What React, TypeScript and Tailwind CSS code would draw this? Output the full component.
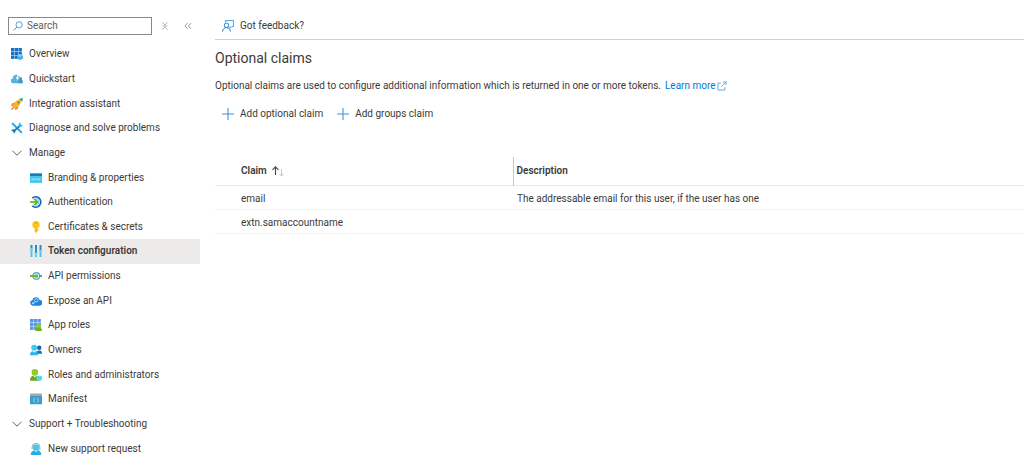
import type { ReactNode } from "react";

const svg = (children: ReactNode, size = "size-3") => (
  <svg viewBox="0 0 16 16" className={`${size} shrink-0`} fill="none" aria-hidden="true">
    {children}
  </svg>
);

const icons = {
  overview: svg(
    <>
      {[0, 5, 10].map((y) =>
        [0, 5, 10].map((x) => (
          <rect key={`${x}-${y}`} x={x} y={y} width="4.5" height="4.5" fill="#1173c7" />
        )),
      )}
      <path d="M12 8l4 2v4l-4 2-4-2v-4z" fill="#4aa9e0" />
      <path d="M12 8l4 2-4 2-4-2z" fill="#8fd0f5" />
    </>,
  ),
  quickstart: svg(
    <>
      <path d="M3 13.500a3 3 0 0 1-.6-6A4.600 4.600 0 0 1 10.500 4a4.500 4.500 0 0 1 3 4.300 2.700 2.700 0 0 1-.3 5.200z" fill="#56b2dd" />
      <path d="M9.500 13.500l1.500-6 3-2.500 2 8.500z" fill="#3b9dcb" />
      <path d="M8.500 3l-2 4.500h2L7.200 11l4-5H9l1.500-3z" fill="#fff" />
    </>,
  ),
  rocket: svg(
    <>
      <path d="M6 6L1.500 7 0 10.500l4 .5zM10 10l-1 4.500L5.500 16 5 12z" fill="#f28a1a" />
      <path d="M2.500 10C4.500 4.500 9 1.500 14.500 1 14 6.500 11 11 6 13.500z" fill="#ffb31a" />
      <path d="M16 0l-5 1 4 4z" fill="#1d9ad0" />
      <circle cx="10" cy="6" r="1.400" fill="#2b8ac6" />
      <path d="M3 10.500l2.500 2.500L1 16H0v-1z" fill="#f59a1c" />
    </>,
  ),
  tools: svg(
    <>
      <path d="M1.500 1.500l13 13" stroke="#28a8e0" strokeWidth="2.800" />
      <path d="M13 4L3.500 12.500" stroke="#1c86bd" strokeWidth="2.600" />
      <path d="M15.800 3.800a3.700 3.700 0 0 1-5 2.200A3.700 3.700 0 0 1 12.700.2l-.4 2.700 1.200.9z" fill="#32b4e6" />
      <path d="M.2 12.100a3.700 3.700 0 0 1 5-2 3.700 3.700 0 0 1-1.800 5.700l.3-2.600-1.300-1z" fill="#1674a8" />
    </>,
  ),
  branding: svg(
    <>
      <path d="M0 2h16v12.500H0z" fill="#3fc8ee" />
      <path d="M0 2h16v3.200H0z" fill="#1276b8" />
      <path d="M2 8.500l1 2.500 1-2.500L5 11l1-2.500M6.500 8.500l1 2.500 1-2.500 1 2.500M10.500 11l1-2.500 1 2.500 1-2.500" stroke="#b8effc" strokeWidth=".8" />
    </>,
  ),
  authentication: svg(
    <>
      <path d="M3 2.900A6.800 6.800 0 1 1 3 13.100" stroke="#1565b5" strokeWidth="2.400" />
      <path d="M4.500 5a4.200 4.200 0 1 1 0 6" stroke="#46b2ef" strokeWidth="1.200" />
      <path d="M0 8h10" stroke="#62b219" strokeWidth="2.200" />
      <path d="M6 4.300L9.700 8 6 11.700" stroke="#62b219" strokeWidth="2.200" />
    </>,
  ),
  key: svg(
    <>
      <circle cx="8" cy="5" r="5" fill="#ffc51d" />
      <path d="M6.300 8h3.400v6.300L8 16l-1.700-1.700z" fill="#fdb813" />
      <circle cx="8" cy="2.600" r="1" fill="#d48700" />
      <path d="M9.700 10.500h1.300v2.500H9.700z" fill="#e8a000" />
    </>,
  ),
  token: svg(
    <>
      <path d="M.7 0h2.600v5H.7zM6.700 0h2.600v10.500H6.700zM12.700 0h2.600v7h-2.600z" fill="#2b86c2" />
      <path d="M.7 6h2.600v10H.7zM6.700 13h2.600v3H6.700zM12.700 9h2.600v7h-2.600z" fill="#47c9ed" />
      <path d="M0 4h4v2.700H0zM6 10h4v2.700H6zM12 6.500h4v2.700h-4z" fill="#6fd5f2" />
    </>,
  ),
  api: svg(
    <>
      <circle cx="8.500" cy="8" r="4.400" stroke="#5aaed0" strokeWidth="1.800" />
      <path d="M0 8h9" stroke="#69ad20" strokeWidth="2.400" />
      <circle cx="8.500" cy="8" r="2.500" fill="#75b927" />
      <path d="M12.500 8H16" stroke="#389ac3" strokeWidth="2.400" />
    </>,
  ),
  expose: svg(
    <>
      <path d="M3.500 14.200a3.600 3.600 0 0 1-.4-7.100 5 5 0 0 1 9.600-.7 3.900 3.900 0 0 1-.4 7.800z" fill="#2583da" />
      <path d="M4 11.500L8 8" stroke="#b9e0ff" strokeWidth="1.200" />
      <circle cx="8.500" cy="7" r="2.200" stroke="#b9e0ff" strokeWidth="1.100" />
      <circle cx="4" cy="11" r="1.300" fill="#b9e0ff" />
    </>,
  ),
  roles: svg(
    <>
      {[0, 5, 10].map((y) =>
        [0, 5, 10].map((x) => (
          <rect key={`${x}-${y}`} x={x} y={y} width="4.500" height="4.500" fill="#5a95e8" />
        )),
      )}
      <path d="M7 16c.2-3.500 1.500-4.800 4.500-4.800S15.800 12.500 16 16z" fill="#6db31c" />
      <circle cx="11.500" cy="8.500" r="3" fill="#86cc2a" />
    </>,
  ),
  owners: svg(
    <>
      <circle cx="12.300" cy="5" r="2.900" fill="#0f65b5" />
      <path d="M8.500 13c0-3 1-4.500 3.800-4.500S16 10 16 13z" fill="#1672c4" />
      <path d="M0 15c0-4 1.500-5.800 5.500-5.800S11 11 11 15z" fill="#2bb5e8" />
      <circle cx="5.500" cy="5" r="3.900" fill="#40c8f2" />
      <path d="M3.700 9.300l1.800 2.200 1.900-2.200z" fill="#fff" />
    </>,
  ),
  admins: svg(
    <>
      <path d="M0 15.500C.2 10.500 2 9 6.500 9s6 1.500 6.300 6.500z" fill="#69a51d" />
      <circle cx="6.500" cy="4.500" r="4.400" fill="#91cb2c" />
      <path d="M4.500 9l2 2.500 2-2.500z" fill="#e9f7cf" />
      <path d="M12.300 8.500l3.700 1v3c0 2-1.800 3-3.700 3.500-2-.5-3.700-1.500-3.700-3.500v-3z" fill="#5bd5ee" />
    </>,
  ),
  manifest: svg(
    <>
      <path d="M0 1h16v14H0z" fill="#3b9dcc" />
      <path d="M0 1h16v3H0z" fill="#a5a7a9" />
      <path d="M6.500 6.500c-1.500 0-.5 2-2 3 1.500 1 .5 3 2 3M9.500 6.500c1.500 0 .5 2 2 3-1.500 1-.5 3-2 3" stroke="#bfe8fa" strokeWidth="1.100" />
    </>,
  ),
  support: svg(
    <>
      <path d="M1 16c.2-4.500 2-6 7-6s6.700 1.500 7 6z" fill="#25afe3" />
      <circle cx="8" cy="6" r="4.400" fill="#42c9ef" />
      <path d="M2.800 8V5.500a5.200 5.200 0 0 1 10.400 0V8c0 1.500-1 2.500-3 2.500" stroke="#a0a4a7" strokeWidth="1.200" />
      <path d="M6.500 10.300l1.500 2 1.500-2z" fill="#fff" />
    </>,
  ),
};

const chevron = svg(<path d="M2 5l6 6 6-6" stroke="#605e5c" strokeWidth="1.300" />);
const plus = svg(<path d="M8 0v16M0 8h16" stroke="#3a93d8" strokeWidth="1.400" />);

type Item = { label: string; icon: ReactNode; level?: "sub" | "group"; current?: boolean };

const items: Item[] = [
  { label: "Overview", icon: icons.overview },
  { label: "Quickstart", icon: icons.quickstart },
  { label: "Integration assistant", icon: icons.rocket },
  { label: "Diagnose and solve problems", icon: icons.tools },
  { label: "Manage", icon: chevron, level: "group" },
  { label: "Branding & properties", icon: icons.branding, level: "sub" },
  { label: "Authentication", icon: icons.authentication, level: "sub" },
  { label: "Certificates & secrets", icon: icons.key, level: "sub" },
  { label: "Token configuration", icon: icons.token, level: "sub", current: true },
  { label: "API permissions", icon: icons.api, level: "sub" },
  { label: "Expose an API", icon: icons.expose, level: "sub" },
  { label: "App roles", icon: icons.roles, level: "sub" },
  { label: "Owners", icon: icons.owners, level: "sub" },
  { label: "Roles and administrators", icon: icons.admins, level: "sub" },
  { label: "Manifest", icon: icons.manifest, level: "sub" },
  { label: "Support + Troubleshooting", icon: chevron, level: "group" },
  { label: "New support request", icon: icons.support, level: "sub" },
];

const claims = [
  { name: "email", description: "The addressable email for this user, if the user has one" },
  { name: "extn.samaccountname", description: "" },
];

function NavItem({ item }: { item: Item }) {
  const row = "flex h-full w-full items-center gap-1.5 pr-2 text-left whitespace-nowrap";
  if (item.level === "group") {
    return (
      <button type="button" aria-expanded="true" className={`${row} pl-[11px]`}>
        {item.icon}
        {item.label}
      </button>
    );
  }
  return (
    <a
      href="#"
      aria-current={item.current ? "page" : undefined}
      className={`${row} ${item.level === "sub" ? "pl-[30px]" : "pl-[11px]"} ${
        item.current ? "bg-[#edebe9] font-semibold" : ""
      }`}
    >
      {item.icon}
      {item.label}
    </a>
  );
}

function Sidebar() {
  return (
    <aside className="w-[200px] shrink-0">
      <div className="flex items-center pt-[17px] pb-[7px] pl-2">
        <label className="flex h-[18px] w-36 items-center gap-1 border border-[#8a8886] px-1">
          {svg(
            <>
              <circle cx="9.800" cy="6" r="5" stroke="#3a93d8" strokeWidth="1.400" />
              <path d="M6 9.800L.8 15" stroke="#3a93d8" strokeWidth="1.500" />
            </>,
            "size-2.5",
          )}
          <input
            type="text"
            aria-label="Search"
            placeholder="Search"
            className="w-full min-w-0 bg-transparent outline-none placeholder:text-[#605e5c]"
          />
        </label>
        <button type="button" aria-label="Expand all" className="ml-2 flex w-2.5 justify-center">
          {svg(<path d="M4 2l4 4.500L12 2M4 14l4-4.500 4 4.500M4 8h8" stroke="#a19f9d" strokeWidth="1.200" />, "size-2.5")}
        </button>
        <button type="button" aria-label="Collapse menu" className="ml-3 flex w-3 justify-center">
          {svg(<path d="M7.500 3.500L3 8l4.500 4.500M13 3.500L8.500 8l4.500 4.500" stroke="#797775" strokeWidth="1.300" />, "size-2.5")}
        </button>
      </div>
      <nav aria-label="App registration">
        <ul className="grid h-[419px] auto-rows-fr">
          {items.map((item) => (
            <li key={item.label}>
              <NavItem item={item} />
            </li>
          ))}
        </ul>
      </nav>
    </aside>
  );
}

export default function App() {
  return (
    <div className="flex min-h-screen bg-white font-[Roboto,'Liberation_Sans',sans-serif] text-[10px] leading-4 text-[#3b3a39]">
      <Sidebar />
      <main className="min-w-0 flex-1 pl-[15px]">
        <div className="border-b border-[#d2d0ce] pt-[18px] pb-[5px] pl-[7px]">
          <button type="button" className="flex items-center gap-1.5">
            {svg(
              <>
                <path d="M4.500 3V.8h11v8h-2.500L10.500 11V8.800" stroke="#3a93d8" strokeWidth="1.200" />
                <circle cx="6" cy="7" r="3" stroke="#1f7fd0" strokeWidth="1.300" />
                <path d="M.8 15.500c.3-3.500 2-5.300 5.200-5.300s4.900 1.800 5.200 5.300" stroke="#1f7fd0" strokeWidth="1.300" />
              </>,
            )}
            Got feedback?
          </button>
        </div>
        <h1 className="pt-2 text-sm leading-5">Optional claims</h1>
        <p className="flex items-center pt-2.5">
          Optional claims are used to configure additional information which is returned in one or more tokens.
          <a href="#" className="ml-1 flex items-center gap-px text-[#0078d4]">
            Learn more
            {svg(
              <path d="M6 3.500H1.500v11h11V10M9.500 1.500h5v5M14.500 1.500L7 9" stroke="#4a9fe8" strokeWidth="1.400" />,
              "size-2.5",
            )}
          </a>
        </p>
        <div className="flex gap-3.5 pt-3 pl-[7px]">
          <button type="button" className="flex items-center gap-1.5">
            {plus}
            Add optional claim
          </button>
          <button type="button" className="flex items-center gap-1.5">
            {plus}
            Add groups claim
          </button>
        </div>
        <table className="mt-[35px] w-full table-fixed border-collapse text-left">
          <thead>
            <tr className="h-7 border-b border-[#edebe9]">
              <th scope="col" className="w-[298px] p-0 pl-[26px] font-semibold">
                <button type="button" className="flex items-center gap-1">
                  Claim
                  <svg viewBox="0 0 14 12" className="h-3 w-3.5" fill="none" aria-hidden="true">
                    <path d="M4.500 10V2M1.500 4.800l3-3 3 3" stroke="#484644" strokeWidth="1.100" />
                    <path d="M10.500 4v7M8.300 8.800l2.200 2.200 2.200-2.200" stroke="#c8c6c4" strokeWidth="1" />
                  </svg>
                </button>
              </th>
              <th scope="col" className="border-l border-[#c8c6c4] p-0 pl-[3px] font-semibold">
                Description
              </th>
            </tr>
          </thead>
          <tbody>
            {claims.map((claim) => (
              <tr key={claim.name} className="h-6 border-b border-[#f3f2f1]">
                <td className="p-0 pt-1 pl-[26px]">{claim.name}</td>
                <td className="p-0 pt-1 pl-1">{claim.description}</td>
              </tr>
            ))}
          </tbody>
        </table>
      </main>
    </div>
  );
}
